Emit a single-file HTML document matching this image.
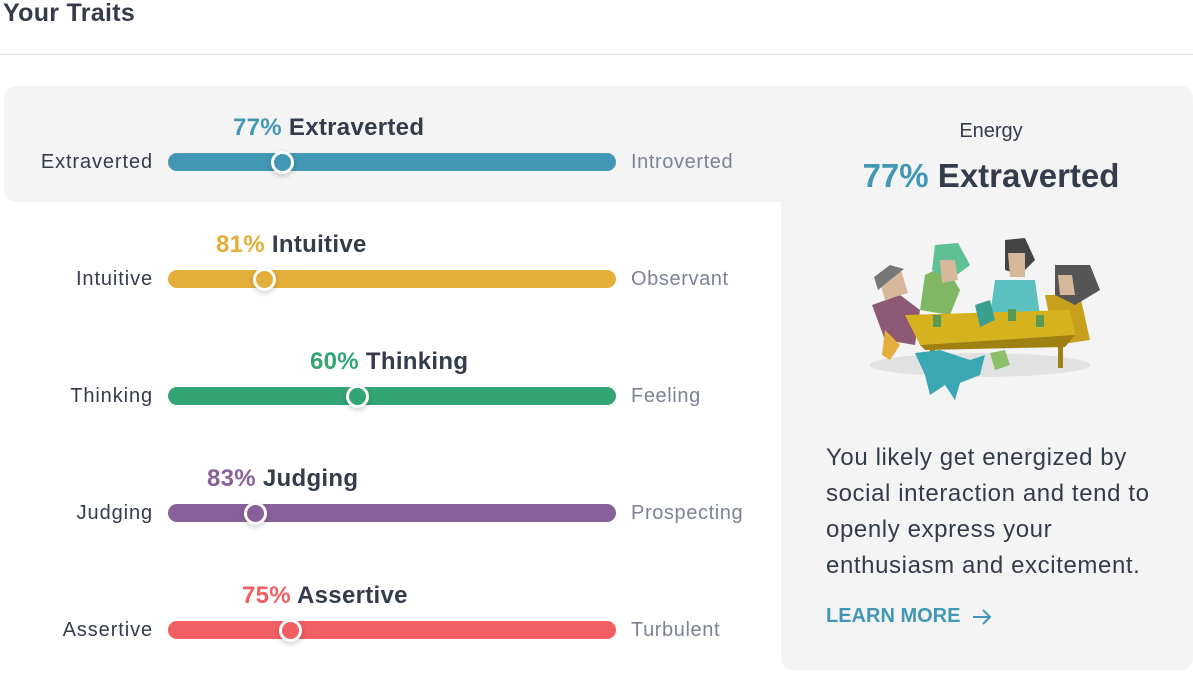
<!DOCTYPE html>
<html><head><meta charset="utf-8"><style>
*{margin:0;padding:0;box-sizing:border-box}
body{width:1193px;height:676px;background:#fff;font-family:"Liberation Sans",sans-serif;color:#343c4b;position:relative;overflow:hidden}
.a{position:absolute;white-space:nowrap}
.h{left:3px;top:-1px;font-size:25px;font-weight:bold;color:#343c4b;letter-spacing:0.3px}
.line{left:0;top:54px;width:1193px;height:1px;background:#e6e6e6}
.hl{left:4px;top:86px;width:800px;height:116px;background:#f4f4f4;border-radius:12px}
.rp{left:781px;top:86px;width:412px;height:584px;background:#f4f4f4;border-radius:0 12px 12px 12px}
.t{font-size:24px;font-weight:bold;color:#343c4b;letter-spacing:0.3px}
.l{font-size:20px;letter-spacing:0.9px;color:#343c4b;text-align:right;width:151px;left:2px}
.r{font-size:20px;letter-spacing:0.6px;color:#7b8394;left:631px}
.bar{left:168px;width:448px;height:18px;border-radius:9px}
.k{width:23px;height:23px;border-radius:50%;border:3.5px solid #fff;box-shadow:0 2px 6px rgba(0,0,0,.2)}
.p{font-size:24px;letter-spacing:0.6px;line-height:36px;color:#343c4b;left:826px;top:440px;white-space:normal;width:360px}
</style></head><body>
<div class="a h">Your Traits</div>
<div class="a line"></div>
<div class="a hl"></div>
<div class="a rp"></div>

<div class="a t" style="left:233px;top:114px"><span style="color:#4298b4">77%</span> Extraverted</div>
<div class="a l" style="top:151px">Extraverted</div>
<div class="a bar" style="top:153px;background:#4298b4"></div>
<div class="a k" style="left:271px;top:151px;background:#4298b4"></div>
<div class="a r" style="top:151px">Introverted</div>

<div class="a t" style="left:216px;top:231px"><span style="color:#e4ae3a">81%</span> Intuitive</div>
<div class="a l" style="top:268px">Intuitive</div>
<div class="a bar" style="top:270px;background:#e4ae3a"></div>
<div class="a k" style="left:253px;top:268px;background:#e4ae3a"></div>
<div class="a r" style="top:268px">Observant</div>

<div class="a t" style="left:310px;top:348px"><span style="color:#33a474">60%</span> Thinking</div>
<div class="a l" style="top:385px">Thinking</div>
<div class="a bar" style="top:387px;background:#33a474"></div>
<div class="a k" style="left:346px;top:385px;background:#33a474"></div>
<div class="a r" style="top:385px">Feeling</div>

<div class="a t" style="left:207px;top:465px"><span style="color:#88619a">83%</span> Judging</div>
<div class="a l" style="top:502px">Judging</div>
<div class="a bar" style="top:504px;background:#88619a"></div>
<div class="a k" style="left:244px;top:502px;background:#88619a"></div>
<div class="a r" style="top:502px">Prospecting</div>

<div class="a t" style="left:242px;top:582px"><span style="color:#f25e62">75%</span> Assertive</div>
<div class="a l" style="top:619px">Assertive</div>
<div class="a bar" style="top:621px;background:#f25e62"></div>
<div class="a k" style="left:279px;top:619px;background:#f25e62"></div>
<div class="a r" style="top:619px">Turbulent</div>

<div class="a" style="left:781px;width:420px;text-align:center;top:120px;font-size:20px">Energy</div>
<div class="a" style="left:781px;width:420px;text-align:center;top:157px;font-size:33px;font-weight:bold"><span style="color:#4298b4">77%</span> Extraverted</div>

<svg class="a" style="left:860px;top:235px" width="250" height="170" viewBox="0 0 250 170">
<ellipse cx="120" cy="130" rx="110" ry="12" fill="#e2e2e2"/>
<polygon points="12,70 40,60 60,75 55,110 25,105" fill="#8c5a74"/>
<polygon points="18,40 40,32 48,58 25,65" fill="#d8b89a"/>
<polygon points="14,42 30,30 44,34 30,45 18,55" fill="#777"/>
<polygon points="25,95 40,110 30,125 22,120" fill="#e4ae3a"/>
<polygon points="65,40 85,30 100,55 90,80 60,75" fill="#7fb765"/>
<polygon points="75,10 98,8 110,30 90,45 72,35" fill="#5fbf95"/>
<polygon points="80,25 95,25 98,45 82,48" fill="#d8b89a"/>
<polygon points="135,45 175,45 180,80 130,80" fill="#5cc0c0"/>
<polygon points="145,5 165,3 175,25 160,40 145,35" fill="#444"/>
<polygon points="148,18 165,18 165,42 150,42" fill="#d8b89a"/>
<polygon points="185,60 220,60 230,105 195,110" fill="#c9a01c"/>
<polygon points="195,30 230,30 240,55 215,70 195,60" fill="#555"/>
<polygon points="198,40 212,40 215,60 200,60" fill="#d8b89a"/>
<polygon points="45,80 210,75 215,100 60,110" fill="#d6b21e"/>
<polygon points="60,110 215,100 205,112 65,115" fill="#a08010"/>
<rect x="70" y="112" width="5" height="25" fill="#a08010"/><rect x="198" y="108" width="5" height="25" fill="#a08010"/>
<polygon points="115,70 130,65 135,85 120,92" fill="#3aa08c"/>
<rect x="73" y="80" width="8" height="12" fill="#5a9a50"/><rect x="148" y="74" width="8" height="12" fill="#5a9a50"/><rect x="176" y="80" width="8" height="12" fill="#5a9a50"/>
<polygon points="55,118 80,115 110,125 125,120 120,140 100,148 95,165 85,150 70,160 65,140" fill="#3aa8b4"/>
<polygon points="130,118 145,115 150,130 135,135" fill="#8cbf6a"/>
</svg>

<div class="a p">You likely get energized by social interaction and tend to openly express your enthusiasm and excitement.</div>
<div class="a" style="left:826px;top:605px;font-size:20px;font-weight:bold;color:#4298b4">LEARN MORE</div>
<svg class="a" style="left:971px;top:606px" width="22" height="22" viewBox="0 0 22 22"><path d="M2 11H19M12 4L19 11L12 18" fill="none" stroke="#4298b4" stroke-width="2"/></svg>
</body></html>
